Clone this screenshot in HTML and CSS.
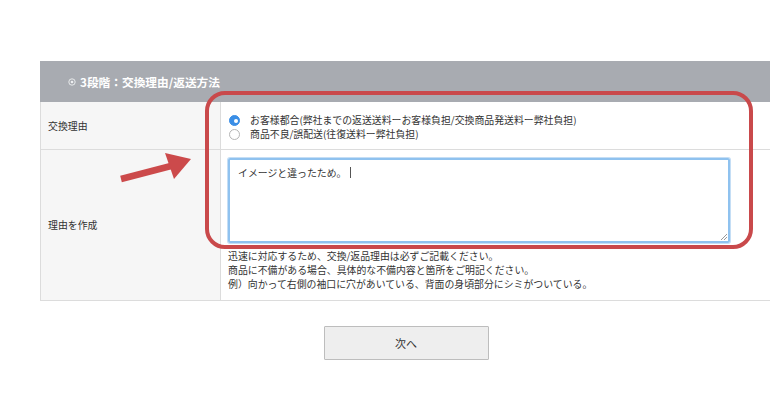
FILE: index.html
```html
<!DOCTYPE html>
<html lang="ja">
<head>
<meta charset="utf-8">
<link rel="stylesheet" href="styles.css">
</head>
<body>
<div class="page">
  <div class="panel">
    <div class="step-head">
      <svg class="step-icon" width="8" height="8" viewBox="0 0 8 8"><circle cx="4" cy="4" r="3.2" fill="none" stroke="#eef0f2" stroke-width="0.9"/><circle cx="4" cy="4" r="1.3" fill="#eef0f2"/></svg>
      <span>3段階：交換理由/返送方法</span>
    </div>
    <table class="form-table">
      <tr class="row-reason">
        <th>交換理由</th>
        <td>
          <div class="radio-line"><span class="radio checked"></span><span>お客様都合(弊社までの返送送料ーお客様負担/交換商品発送料ー弊社負担)</span></div>
          <div class="radio-line"><span class="radio"></span><span>商品不良/誤配送(往復送料ー弊社負担)</span></div>
        </td>
      </tr>
      <tr class="row-text">
        <th>理由を作成</th>
        <td>
          <div class="textarea">イメージと違ったため。<span class="caret"></span><span class="grip"></span></div>
          <div class="help">
            <p>迅速に対応するため、交換/返品理由は必ずご記載ください。</p>
            <p>商品に不備がある場合、具体的な不備内容と箇所をご明記ください。</p>
            <p>例）向かって右側の袖口に穴があいている、背面の身頃部分にシミがついている。</p>
          </div>
        </td>
      </tr>
    </table>
    <div class="actions"><button class="next-btn">次へ</button></div>
  </div>
</div>
<div class="highlight"></div>
<svg class="arrow" width="80" height="36" viewBox="0 0 80 36">
  <line x1="2" y1="28" x2="52" y2="15" stroke="#cc4a4b" stroke-width="6.5"/>
  <polygon points="46,2 72,8 55,28" fill="#cc4a4b"/>
</svg>
</body>
</html>
```
FILE: styles.css
```css
html, body {
  margin: 0;
  padding: 0;
  overflow: hidden;
  background: #fff;
}
body {
  position: relative;
  width: 770px;
  height: 400px;
  font-family: "Noto Sans CJK JP", "Noto Sans", sans-serif;
  color: #333;
  font-size: 9.9px;
}
.page {
  padding: 61px 0 0 40px;
}
.panel {
  width: 732px;
}
.step-head {
  height: 41px;
  background: #a8abb1;
  color: #fff;
  font-weight: bold;
  font-size: 11.7px;
  display: flex;
  align-items: center;
  padding-left: 28px;
  gap: 4px;
}
.step-icon {
  margin-top: 1px;
}
.form-table {
  width: 100%;
  border-collapse: collapse;
  border-left: 1px solid #dcdcdc;
}
.form-table th {
  width: 172px;
  background: #f6f6f6;
  font-weight: normal;
  text-align: left;
  padding: 0 0 0 7px;
  border-right: 1px solid #dcdcdc;
  border-bottom: 1px solid #dcdcdc;
  vertical-align: middle;
  color: #333;
}
.form-table td {
  border-bottom: 1px solid #dcdcdc;
  vertical-align: top;
}
.row-reason th, .row-reason td {
  height: 47px;
}
.row-reason td {
  padding: 11px 0 0 8px;
  box-sizing: border-box;
}
.radio-line {
  display: flex;
  align-items: center;
  gap: 10px;
  height: 14px;
  line-height: 14px;
}
.radio {
  width: 11px;
  height: 11px;
  border-radius: 50%;
  border: 1px solid #b5b5b5;
  background: #fff;
  box-sizing: border-box;
  position: relative;
  flex: none;
}
.radio.checked {
  border-color: #3a8ee6;
  background: #3a8ee6;
}
.radio.checked::after {
  content: "";
  position: absolute;
  left: 3.5px;
  top: 3.5px;
  width: 4px;
  height: 4px;
  border-radius: 50%;
  background: #fff;
}
.row-text th, .row-text td {
  height: 150px;
}
.row-text td {
  padding: 8px 0 0 7px;
  box-sizing: border-box;
}
.textarea {
  position: relative;
  width: 502px;
  height: 85px;
  box-sizing: border-box;
  border: 2px solid #8fc2ef;
  border-radius: 2px;
  box-shadow: 0 0 0 1px #c5def5;
  padding: 6px 8px;
  line-height: 14px;
  color: #333;
}
.caret {
  display: inline-block;
  width: 1px;
  height: 11px;
  background: #555;
  margin-left: 4px;
  vertical-align: -1px;
}
.grip {
  position: absolute;
  right: 1px;
  bottom: 1px;
  width: 6px;
  height: 6px;
  background: linear-gradient(135deg, transparent 45%, #999 45%, #999 55%, transparent 55%, transparent 70%, #999 70%, #999 80%, transparent 80%);
}
.help {
  margin-top: 6px;
  line-height: 14px;
}
.help p {
  margin: 0;
}
.actions {
  display: flex;
  justify-content: center;
  padding-top: 25px;
}
.next-btn {
  width: 165px;
  height: 34px;
  background: #eeeeee;
  border: 1px solid #bdbdbd;
  border-radius: 1px;
  font-family: "Noto Sans CJK JP", sans-serif;
  font-size: 11px;
  color: #333;
}
.highlight {
  position: absolute;
  left: 205px;
  top: 91px;
  width: 548px;
  height: 158px;
  box-sizing: border-box;
  border: 4.5px solid #c9494b;
  border-radius: 20px;
}
.arrow {
  position: absolute;
  left: 119px;
  top: 151px;
}
```
